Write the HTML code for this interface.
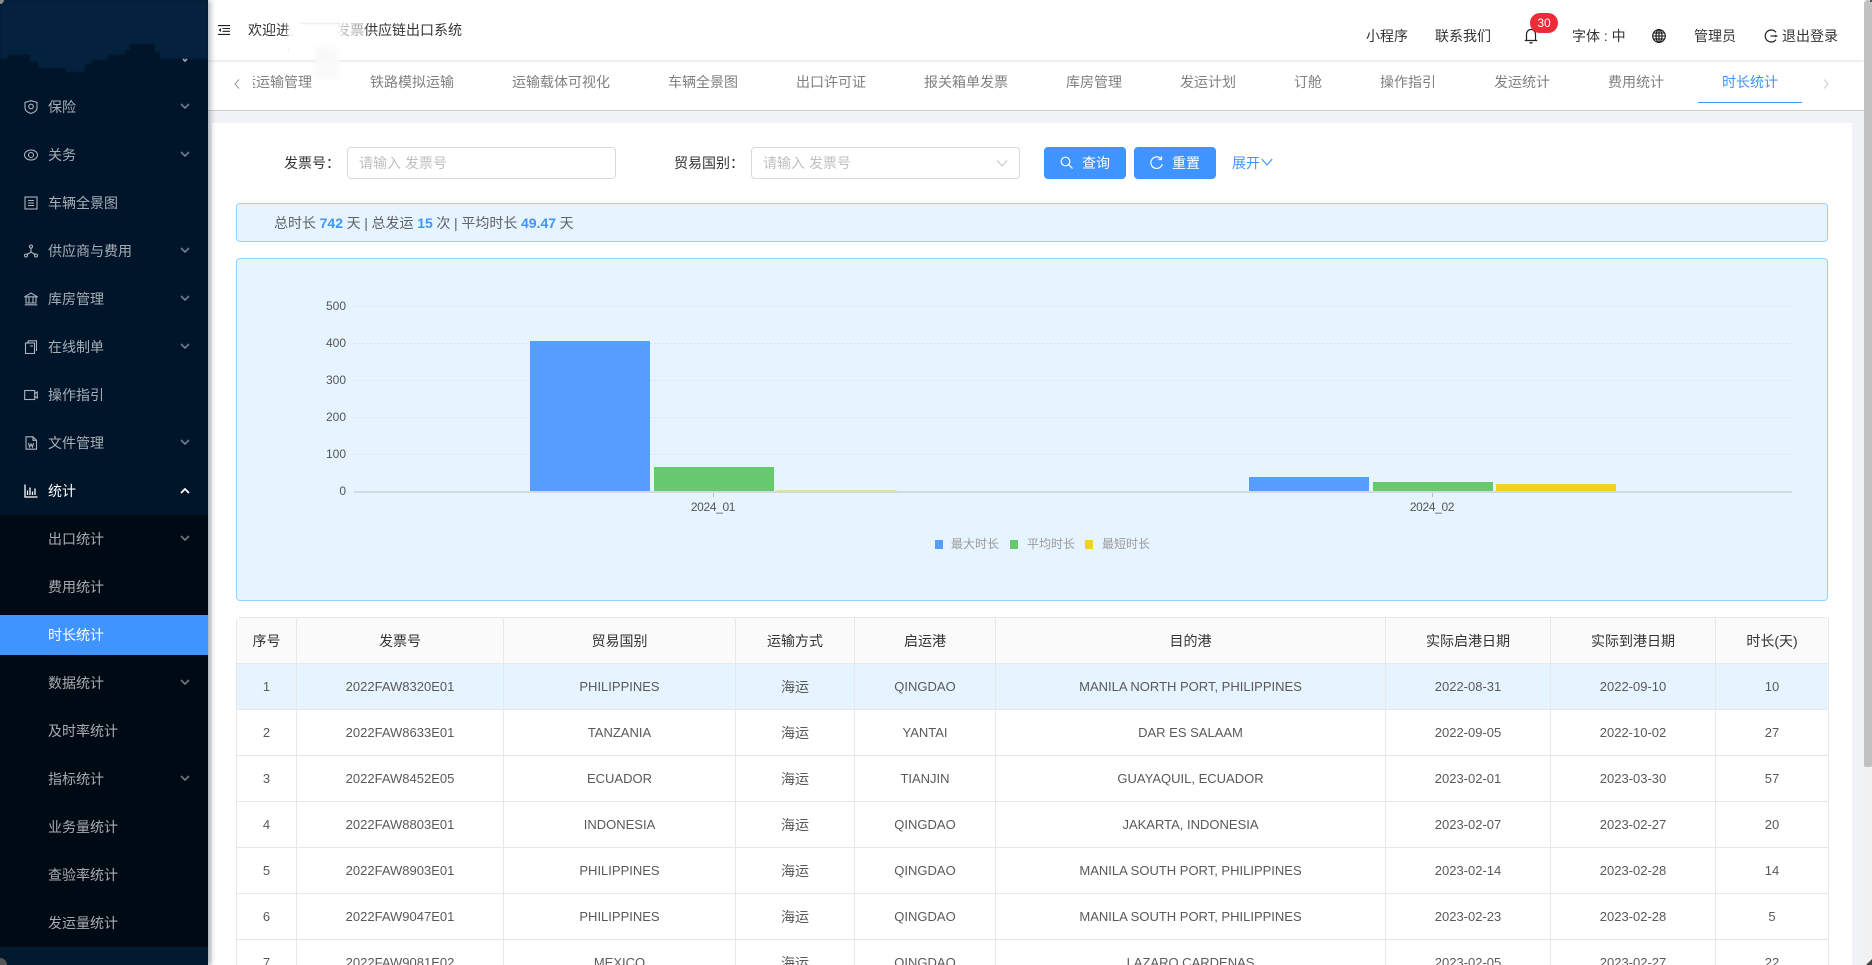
<!DOCTYPE html>
<html lang="zh-CN">
<head>
<meta charset="utf-8">
<title>时长统计</title>
<style>
*{box-sizing:border-box}
html,body{margin:0;padding:0;width:1872px;height:965px;overflow:hidden;background:#f0f2f5;font-family:"Liberation Sans","Noto Sans CJK SC",sans-serif;font-size:14px;color:#333}
#root{position:relative;width:1872px;height:965px;overflow:hidden}
.a{position:absolute}
.t{position:absolute;line-height:20px;white-space:nowrap}
.side{left:0;top:0;width:208px;height:965px;background:#00142a;box-shadow:2px 0 6px rgba(0,21,41,.35);z-index:3;overflow:hidden}
.m{position:absolute;left:48px;line-height:20px;color:rgba(255,255,255,.65);white-space:nowrap}
.ic{position:absolute;left:24px;width:14px;height:14px;fill:none;stroke:rgba(255,255,255,.68);stroke-width:1.1}
.ch{position:absolute;left:180px;width:10px;height:6px;fill:none;stroke:rgba(255,255,255,.42);stroke-width:1.8}
.tab{position:absolute;top:72px;line-height:20px;color:#808080;white-space:nowrap}
.inp{position:absolute;top:147px;height:32px;background:#fff;border:1px solid #d9d9d9;border-radius:4px;color:#bfbfbf;line-height:30px;padding-left:11px}
.btn{position:absolute;top:147px;height:32px;width:82px;border-radius:4px;background:#4094ff;color:#fff;line-height:32px}
.lb{position:absolute;top:153px;line-height:20px;color:#333}
.ax{position:absolute;font-size:12px;line-height:14px;color:#555;text-align:right;width:40px;left:306px}
.grid{position:absolute;left:354px;width:1438px;height:1px;background:repeating-linear-gradient(90deg,#dbe7ef 0 2px,transparent 2px 4px)}
.bar{position:absolute}
.lg{position:absolute;top:534px;font-size:12px;line-height:20px;color:#9a9a9a;white-space:nowrap}
table{position:absolute;left:236px;top:617px;width:1592px;table-layout:fixed;border-collapse:separate;border-spacing:0;border-top:1px solid #e8e8e8;border-left:1px solid #e8e8e8;border-radius:4px 4px 0 0;background:#fff}
th,td{height:46px;padding:0;text-align:center;border-right:1px solid #e8e8e8;border-bottom:1px solid #e8e8e8;font-weight:normal;overflow:hidden;white-space:nowrap}
th{height:46px;background:#fafafa;color:#333;font-size:14px}
td{font-size:13px;color:#595959}
td.c{font-size:14px}
tr.on td{background:#e6f4ff}
</style>
</head>
<body>
<div id="root">

<!-- content card -->
<div class="a" style="left:208px;top:0;width:1656px;height:60px;background:#fff;box-shadow:0 1px 3px rgba(0,0,0,.12);z-index:2"></div>
<div class="a" style="left:208px;top:60px;width:1656px;height:51px;background:#fff;border-bottom:1px solid #cfcfcf"></div>
<div class="a" style="left:212px;top:123px;width:1640px;height:842px;background:#fff"></div>

<!-- header -->
<div style="position:absolute;left:0;top:0;z-index:4">
<svg class="a" style="left:218px;top:25px" width="12" height="10" viewBox="0 0 12 10" fill="none" stroke="#222" stroke-width="1.1"><path d="M0 .6H12M4.5 3.5H12M4.5 6.3H12M0 9.4H12"/><path d="M3 3L.6 5 3 7z" fill="#222" stroke="none"/></svg>
<div class="t" style="left:248px;top:20px;color:#333">欢迎进入</div>
<div class="t" style="left:336px;top:20px;color:#333">发票供应链出口系统</div>
<div class="a" style="left:288px;top:18px;width:54px;height:34px;background:#fff;filter:blur(3px)"></div>
<div class="a" style="left:338px;top:20px;width:26px;height:20px;background:rgba(255,255,255,.6);filter:blur(2px)"></div>
<div class="a" style="left:300px;top:23px;width:40px;height:1px;background:#e6e6e6;filter:blur(.6px)"></div>
<div class="a" style="left:288px;top:47px;width:72px;height:6px;border-left:1px solid #f0f0f0;filter:blur(.5px)"></div>
<div class="a" style="left:316px;top:47px;width:22px;height:30px;background:#f9f9f9;filter:blur(3px)"></div>

<div class="t" style="left:1366px;top:26px;color:#333">小程序</div>
<div class="t" style="left:1435px;top:26px;color:#333">联系我们</div>
<svg class="a" style="left:1524px;top:28px" width="14" height="16" viewBox="0 0 14 16" fill="none" stroke="#222" stroke-width="1.2"><path d="M2.5 12V6.5C2.5 3.6 4.4 1.5 7 1.5s4.500 2.100 4.500 5V12M.8 12.500H13.200"/><path d="M5.500 14.800H8.500" stroke-width="1.400"/></svg>
<div class="a" style="left:1530px;top:13px;width:28px;height:20px;border-radius:10px;background:#ee2b36;color:#fff;font-size:12px;line-height:20px;text-align:center">30</div>
<div class="t" style="left:1572px;top:26px;color:#333">字体 : 中</div>
<svg class="a" style="left:1652px;top:29px" width="14" height="14" viewBox="0 0 14 14" fill="none" stroke="#111" stroke-width="1.100"><circle cx="7" cy="7" r="6.300"/><ellipse cx="7" cy="7" rx="3" ry="6.300"/><path d="M7 .7V13.300M.7 7H13.300M1.500 4H12.500M1.500 10H12.500"/></svg>
<div class="t" style="left:1694px;top:26px;color:#333">管理员</div>
<svg class="a" style="left:1764px;top:29px" width="14" height="14" viewBox="0 0 14 14" fill="none" stroke="#222" stroke-width="1.200"><path d="M12 3.400A6 6 0 1 0 12 10.600"/><path d="M6.500 7H13.300"/><path d="M13.500 7l-2.200-1.500v3z" fill="#222" stroke="none"/></svg>
<div class="t" style="left:1782px;top:26px;color:#333">退出登录</div>
</div>

<!-- tabs -->
<div class="a" style="left:253px;top:60px;width:1560px;height:50px;overflow:hidden">
  <div class="tab" style="left:-25px;top:12px">海运运输管理</div>
</div>
<svg class="a" style="left:234px;top:79px" width="6" height="10" viewBox="0 0 6 10" fill="none" stroke="#999" stroke-width="1"><path d="M5 .5L1 5l4 4.500"/></svg>
<div class="tab" style="left:370px">铁路模拟运输</div>
<div class="tab" style="left:512px">运输载体可视化</div>
<div class="tab" style="left:668px">车辆全景图</div>
<div class="tab" style="left:796px">出口许可证</div>
<div class="tab" style="left:924px">报关箱单发票</div>
<div class="tab" style="left:1066px">库房管理</div>
<div class="tab" style="left:1180px">发运计划</div>
<div class="tab" style="left:1294px">订舱</div>
<div class="tab" style="left:1380px">操作指引</div>
<div class="tab" style="left:1494px">发运统计</div>
<div class="tab" style="left:1608px">费用统计</div>
<div class="tab" style="left:1722px;color:#4094ff">时长统计</div>
<div class="a" style="left:1698px;top:102px;width:104px;height:1px;background:#4094ff"></div>
<svg class="a" style="left:1823px;top:79px" width="6" height="10" viewBox="0 0 6 10" fill="none" stroke="#ccc" stroke-width="1"><path d="M1 .5L5 5 1 9.500"/></svg>
<div class="a" style="left:316px;top:60px;width:22px;height:18px;background:#fafafa;filter:blur(3px);z-index:4"></div>

<!-- search -->
<div class="lb" style="left:284px">发票号：</div>
<div class="inp" style="left:347px;width:269px">请输入 发票号</div>
<div class="lb" style="left:674px">贸易国别：</div>
<div class="inp" style="left:751px;width:269px">请输入 发票号</div>
<svg class="a" style="left:996px;top:160px" width="12" height="7" viewBox="0 0 12 7" fill="none" stroke="#c4c4c4" stroke-width="1"><path d="M1 .5L6 6l5-5.500"/></svg>
<div class="btn" style="left:1044px"><svg class="a" style="left:16px;top:9px" width="13" height="13" viewBox="0 0 13 13" fill="none" stroke="#fff" stroke-width="1.200"><circle cx="5.500" cy="5.500" r="4.300"/><path d="M8.700 8.700L12.500 12.500"/></svg><span class="a" style="left:38px">查询</span></div>
<div class="btn" style="left:1134px"><svg class="a" style="left:16px;top:9px" width="13" height="13" viewBox="0 0 13 13" fill="none" stroke="#fff" stroke-width="1.200"><path d="M11 2.800A5.800 5.800 0 1 0 12.300 8"/><path d="M11.500 .3v3.200H8.300"/></svg><span class="a" style="left:38px">重置</span></div>
<div class="t" style="left:1232px;top:153px;color:#4094ff">展开</div>
<svg class="a" style="left:1261px;top:158px" width="12" height="8" viewBox="0 0 12 8" fill="none" stroke="#4094ff" stroke-width="1.100"><path d="M.8 1L6 7l5.200-6"/></svg>

<!-- alert -->
<div class="a" style="left:236px;top:203px;width:1592px;height:39px;background:#e6f4ff;border:1px solid #91d5ff;border-radius:4px"></div>
<div class="t" style="left:274px;top:213px;color:#606266;word-spacing:-.25px">总时长 <b style="color:#4094ff;font-weight:600">742</b> 天 | 总发运 <b style="color:#4094ff;font-weight:600">15</b> 次 | 平均时长 <b style="color:#4094ff;font-weight:600">49.47</b> 天</div>

<!-- chart -->
<div class="a" style="left:236px;top:258px;width:1592px;height:343px;background:#e6f4ff;border:1px solid #91d5ff;border-radius:4px"></div>
<div class="grid" style="top:306px"></div>
<div class="grid" style="top:343px"></div>
<div class="grid" style="top:380px"></div>
<div class="grid" style="top:417px"></div>
<div class="grid" style="top:454px"></div>
<div class="ax" style="top:299px">500</div>
<div class="ax" style="top:336px">400</div>
<div class="ax" style="top:373px">300</div>
<div class="ax" style="top:410px">200</div>
<div class="ax" style="top:447px">100</div>
<div class="ax" style="top:484px">0</div>
<div class="a" style="left:354px;top:491px;width:1438px;height:2px;background:#d2dae0"></div>
<div class="bar" style="left:530px;top:341px;width:120px;height:150px;background:#559eff"></div>
<div class="bar" style="left:654px;top:467px;width:120px;height:24px;background:#66c96e"></div>
<div class="bar" style="left:777px;top:490px;width:120px;height:1px;background:#e8e0a8"></div>
<div class="bar" style="left:1249px;top:477px;width:120px;height:14px;background:#559eff"></div>
<div class="bar" style="left:1373px;top:482px;width:120px;height:9px;background:#66c96e"></div>
<div class="bar" style="left:1496px;top:484px;width:120px;height:7px;background:#f2d124"></div>
<div class="a" style="left:713px;top:493px;width:1px;height:4px;background:#b5bcc2"></div>
<div class="a" style="left:1432px;top:493px;width:1px;height:4px;background:#b5bcc2"></div>
<div class="t" style="left:673px;top:497px;width:80px;text-align:center;font-size:12px;color:#555;letter-spacing:-.35px">2024_01</div>
<div class="t" style="left:1392px;top:497px;width:80px;text-align:center;font-size:12px;color:#555;letter-spacing:-.35px">2024_02</div>
<div class="a" style="left:935px;top:540px;width:8px;height:9px;background:#559eff"></div>
<div class="lg" style="left:951px">最大时长</div>
<div class="a" style="left:1010px;top:540px;width:8px;height:9px;background:#66c96e"></div>
<div class="lg" style="left:1027px">平均时长</div>
<div class="a" style="left:1085px;top:540px;width:8px;height:9px;background:#f2d124"></div>
<div class="lg" style="left:1102px">最短时长</div>

<!-- table -->
<table>
<colgroup><col style="width:60px"><col style="width:207px"><col style="width:232px"><col style="width:119px"><col style="width:141px"><col style="width:390px"><col style="width:165px"><col style="width:165px"><col style="width:113px"></colgroup>
<tr><th>序号</th><th>发票号</th><th>贸易国别</th><th>运输方式</th><th>启运港</th><th>目的港</th><th>实际启港日期</th><th>实际到港日期</th><th>时长(天)</th></tr>
<tr class="on"><td>1</td><td>2022FAW8320E01</td><td>PHILIPPINES</td><td class="c">海运</td><td>QINGDAO</td><td>MANILA NORTH PORT, PHILIPPINES</td><td>2022-08-31</td><td>2022-09-10</td><td>10</td></tr>
<tr><td>2</td><td>2022FAW8633E01</td><td>TANZANIA</td><td class="c">海运</td><td>YANTAI</td><td>DAR ES SALAAM</td><td>2022-09-05</td><td>2022-10-02</td><td>27</td></tr>
<tr><td>3</td><td>2022FAW8452E05</td><td>ECUADOR</td><td class="c">海运</td><td>TIANJIN</td><td>GUAYAQUIL, ECUADOR</td><td>2023-02-01</td><td>2023-03-30</td><td>57</td></tr>
<tr><td>4</td><td>2022FAW8803E01</td><td>INDONESIA</td><td class="c">海运</td><td>QINGDAO</td><td>JAKARTA, INDONESIA</td><td>2023-02-07</td><td>2023-02-27</td><td>20</td></tr>
<tr><td>5</td><td>2022FAW8903E01</td><td>PHILIPPINES</td><td class="c">海运</td><td>QINGDAO</td><td>MANILA SOUTH PORT, PHILIPPINES</td><td>2023-02-14</td><td>2023-02-28</td><td>14</td></tr>
<tr><td>6</td><td>2022FAW9047E01</td><td>PHILIPPINES</td><td class="c">海运</td><td>QINGDAO</td><td>MANILA SOUTH PORT, PHILIPPINES</td><td>2023-02-23</td><td>2023-02-28</td><td>5</td></tr>
<tr><td>7</td><td>2022FAW9081E02</td><td>MEXICO</td><td class="c">海运</td><td>QINGDAO</td><td>LAZARO CARDENAS</td><td>2023-02-05</td><td>2023-02-27</td><td>22</td></tr>
</table>

<!-- scrollbar -->
<div class="a" style="left:1864px;top:0;width:8px;height:965px;background:#f1f1f1;z-index:5"></div>
<div class="a" style="left:1864px;top:0;width:8px;height:767px;background:#c1c1c1;border-radius:4px 4px 2px 2px;z-index:6"></div>
<div class="a" style="left:1870px;top:0;width:2px;height:2px;background:#555;z-index:7"></div>
<svg class="a" style="left:1866px;top:959px;z-index:7" width="6" height="6" viewBox="0 0 6 6"><path d="M6 0V6H0z" fill="#444"/></svg>

<!-- sidebar -->
<div class="a side">
  <svg class="a" style="left:0;top:0;filter:blur(.8px)" width="208" height="72" viewBox="0 0 208 72"><path d="M-2 -2H210V59H160V52H155V44H130V50H125V55H108V60H92V64H85V72H65V68H38V62H30V55H8V59H-2z" fill="#04213d"/></svg>
  <div class="a" style="left:0;top:0;width:4px;height:4px;background:#8a8a8a;border-bottom-right-radius:4px"></div>
  <svg class="ch" style="top:57px;stroke:rgba(255,255,255,.6)" viewBox="0 0 10 6"><path d="M3 2L5 4 7 2"/></svg>

  <svg class="ic" style="top:100px" viewBox="0 0 14 14"><path d="M7 .7L13 2.400V8C13 10.500 10 12.500 7 13.500 4 12.500 1 10.500 1 8V2.400z"/><circle cx="7" cy="6.500" r="2.300"/></svg>
  <div class="m" style="top:97px">保险</div><svg class="ch" style="top:103px" viewBox="0 0 10 6"><path d="M1 1L5 5 9 1"/></svg>
  <svg class="ic" style="top:148px" viewBox="0 0 14 14"><ellipse cx="7" cy="7" rx="6.500" ry="5"/><circle cx="7" cy="7" r="2.500"/></svg>
  <div class="m" style="top:145px">关务</div><svg class="ch" style="top:151px" viewBox="0 0 10 6"><path d="M1 1L5 5 9 1"/></svg>
  <svg class="ic" style="top:196px" viewBox="0 0 14 14"><rect x="1" y="1" width="12" height="12"/><path d="M4 4.500H10M4 7H10M4 9.500H10"/></svg>
  <div class="m" style="top:193px">车辆全景图</div>
  <svg class="ic" style="top:244px" viewBox="0 0 14 14"><circle cx="7" cy="2.500" r="1.500"/><circle cx="2" cy="11.500" r="1.500"/><circle cx="12" cy="11.500" r="1.500"/><path d="M7 4V8M7 8L3 10.500M7 8L11 10.500"/></svg>
  <div class="m" style="top:241px">供应商与费用</div><svg class="ch" style="top:247px" viewBox="0 0 10 6"><path d="M1 1L5 5 9 1"/></svg>
  <svg class="ic" style="top:292px" viewBox="0 0 14 14"><path d="M.8 4.800L7 1 13.200 4.800zM2 4.800V11M5 4.800V11M9 4.800V11M12 4.800V11M.8 12.800H13.200M1.500 11H12.500"/></svg>
  <div class="m" style="top:289px">库房管理</div><svg class="ch" style="top:295px" viewBox="0 0 10 6"><path d="M1 1L5 5 9 1"/></svg>
  <svg class="ic" style="top:340px" viewBox="0 0 14 14"><rect x="1.500" y="3" width="9" height="10.500"/><path d="M4 .8H12.500V11M4 3V.8M6 6H9"/></svg>
  <div class="m" style="top:337px">在线制单</div><svg class="ch" style="top:343px" viewBox="0 0 10 6"><path d="M1 1L5 5 9 1"/></svg>
  <svg class="ic" style="top:388px" viewBox="0 0 14 14"><rect x=".7" y="2.500" width="10" height="9"/><path d="M10.700 5.500L13.300 4V10L10.700 8.500"/></svg>
  <div class="m" style="top:385px">操作指引</div>
  <svg class="ic" style="top:436px" viewBox="0 0 14 14"><path d="M2 .8H9L12.500 4.300V13.200H2zM9 .8V4.300H12.500M4.500 7L5.500 11 7 8 8.500 11 9.500 7"/></svg>
  <div class="m" style="top:433px">文件管理</div><svg class="ch" style="top:439px" viewBox="0 0 10 6"><path d="M1 1L5 5 9 1"/></svg>
  <svg class="ic" style="top:484px;stroke:#fff" viewBox="0 0 14 14"><path d="M1 .5V13H13.500M3.500 11V6.500M6 11V3.500M8.500 11V7.500M11 11V4.500" stroke-width="1.300"/></svg>
  <div class="m" style="top:481px;color:#fff">统计</div><svg class="ch" style="top:488px;stroke:#fff" viewBox="0 0 10 6"><path d="M1 5L5 1 9 5"/></svg>

  <div class="a" style="left:0;top:515px;width:208px;height:432px;background:#000a14"></div>
  <div class="m" style="top:529px">出口统计</div><svg class="ch" style="top:535px" viewBox="0 0 10 6"><path d="M1 1L5 5 9 1"/></svg>
  <div class="m" style="top:577px">费用统计</div>
  <div class="a" style="left:0;top:615px;width:208px;height:40px;background:#4094ff"></div>
  <div class="m" style="top:625px;color:#fff">时长统计</div>
  <div class="m" style="top:673px">数据统计</div><svg class="ch" style="top:679px" viewBox="0 0 10 6"><path d="M1 1L5 5 9 1"/></svg>
  <div class="m" style="top:721px">及时率统计</div>
  <div class="m" style="top:769px">指标统计</div><svg class="ch" style="top:775px" viewBox="0 0 10 6"><path d="M1 1L5 5 9 1"/></svg>
  <div class="m" style="top:817px">业务量统计</div>
  <div class="m" style="top:865px">查验率统计</div>
  <div class="m" style="top:913px">发运量统计</div>
  <div class="a" style="left:0;top:947px;width:208px;height:18px;background:#021a30"></div>
  <div class="m" style="top:963px">设置</div>
  <div class="a" style="left:0;top:958px;width:7px;height:7px;background:#555;border-top-right-radius:7px"></div>
</div>

</div>
</body>
</html>
